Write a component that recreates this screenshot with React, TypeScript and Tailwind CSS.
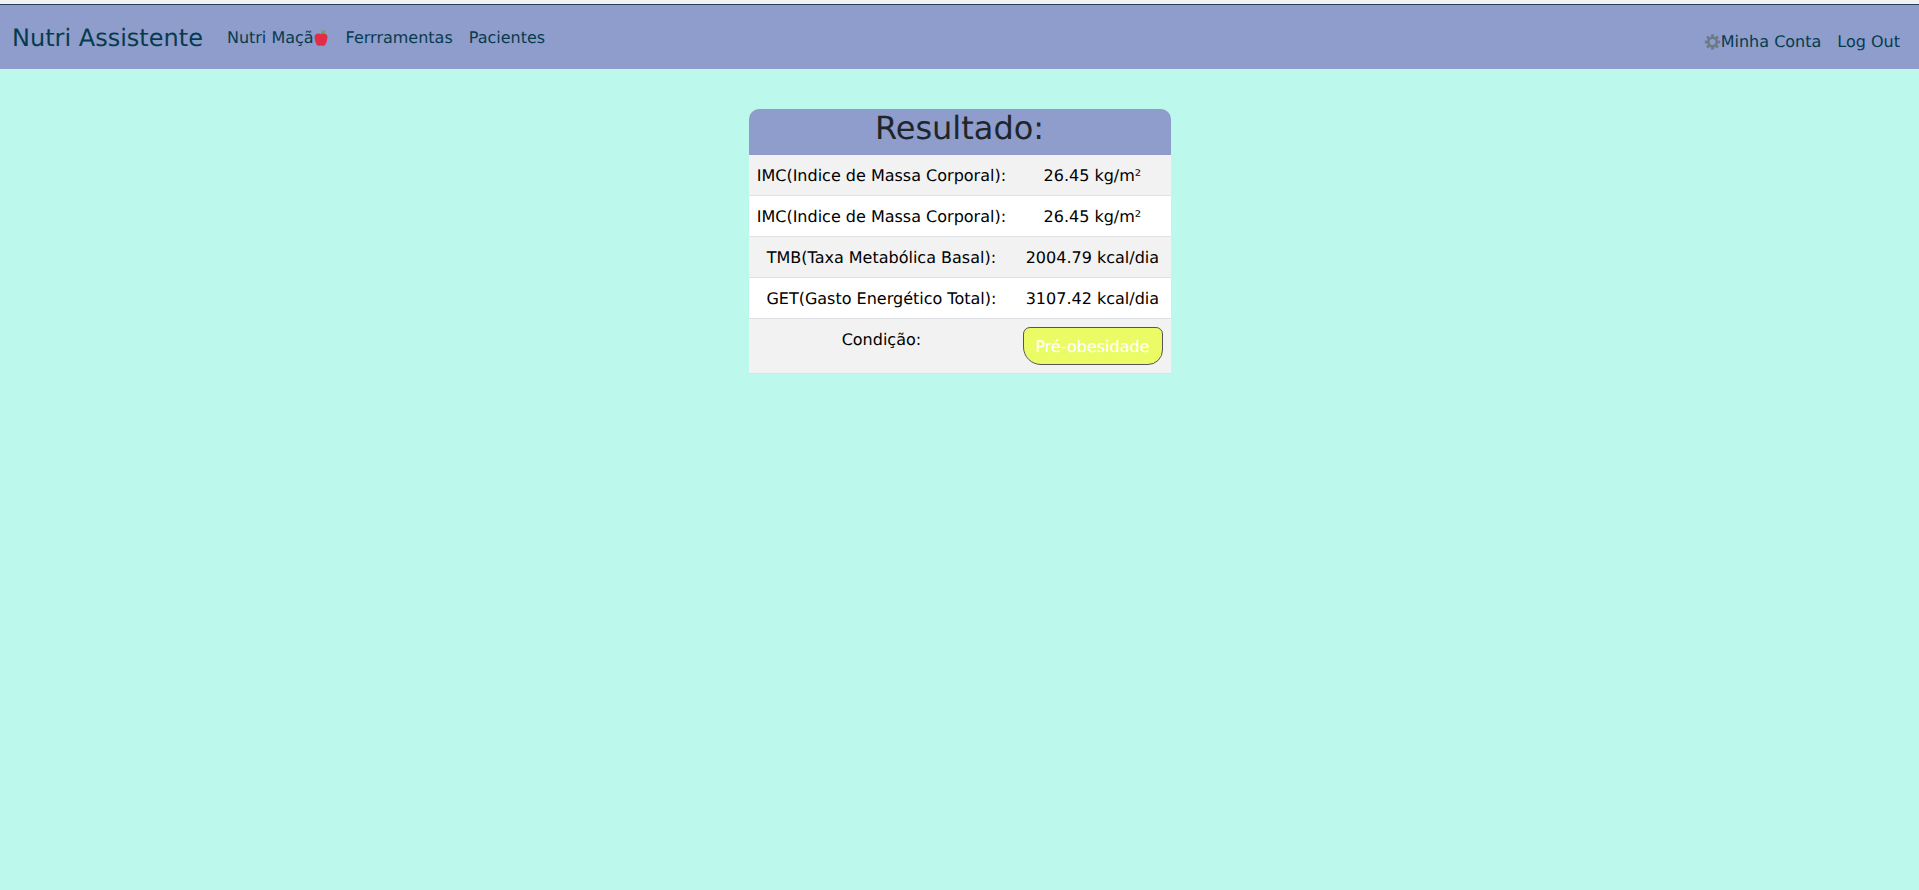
import React from 'react'

const AppleIcon = () => (
  <svg width="14" height="16" viewBox="0 0 14 16" className="mr-0.5 inline-block">
    <path d="M6.6 4 L7.4 1.6 C8.4 0.4 9.8 0.2 11.4 0.4 L11.2 2.2 C10.4 3.4 9 4 7.4 4.4 Z" fill="#7ba05b" />
    <path d="M7 4.2 C5 3 1 3.2 0.6 6.4 C0.3 9.4 1.8 14 3.6 15.6 C5 16.2 5.8 15.5 7 15.5 C8.2 15.5 9 16.2 10.4 15.6 C12.2 14 13.7 9.4 13.4 6.4 C13 3.2 9 3 7 4.2 Z" fill="#e22e45" />
  </svg>
)

const GearIcon = () => (
  <svg width="17" height="16" viewBox="0 0 16 16" className="inline-block">
    <g stroke="#6d7b85" strokeWidth="2.8">
      <line x1="8" y1="0.3" x2="8" y2="15.7" />
      <line x1="0.3" y1="8" x2="15.7" y2="8" />
      <line x1="2.6" y1="2.6" x2="13.4" y2="13.4" />
      <line x1="13.4" y1="2.6" x2="2.6" y2="13.4" />
    </g>
    <circle cx="8" cy="8" r="4.2" fill="#8e9dcc" stroke="#6d7b85" strokeWidth="2.6" />
  </svg>
)

const rows = [
  ['IMC(Indice de Massa Corporal):', '26.45 kg/m²'],
  ['IMC(Indice de Massa Corporal):', '26.45 kg/m²'],
  ['TMB(Taxa Metabólica Basal):', '2004.79 kcal/dia'],
  ['GET(Gasto Energético Total):', '3107.42 kcal/dia'],
]

export default function App() {
  return (
    <div className="min-h-screen bg-[#bcf8ec] font-['DejaVu_Sans',sans-serif] text-base leading-6 [text-rendering:geometricPrecision]">
      <div className="h-1 bg-[#f2f2f5]" />
      <div className="h-px bg-[#26405c]" />
      {/* Navbar */}
      <nav className="flex h-16 items-center justify-between bg-[#8e9dcc] pl-3 pr-[19px] text-[#073b4c]">
        <div className="mt-0.5 flex items-center">
          <span className="mr-6 text-2xl leading-9">Nutri Assistente</span>
          <div className="flex items-center gap-4">
            <a className="flex items-center">Nutri Maçã<AppleIcon /></a>
            <a>Ferrramentas</a>
            <a>Pacientes</a>
          </div>
        </div>
        <div className="mt-2.5 flex items-center gap-4">
          <a className="flex items-center"><GearIcon />Minha Conta</a>
          <a>Log Out</a>
        </div>
      </nav>

      {/* Result card */}
      <div className="flex justify-center pt-10">
        <div className="w-[422px]">
          <h1 className="rounded-t-[10px] bg-[#8e9dcc] pb-2 text-center text-[32px] leading-[38px] text-[#212529]">Resultado:</h1>
          <table className="w-full border-collapse text-center text-black">
            <tbody>
              {rows.map(([label, value], i) => (
                <tr key={i} className={i % 2 === 0 ? 'bg-[#f2f2f2]' : 'bg-white'}>
                  <td className="border-b border-[#dee2e6] px-2 pt-[9px] pb-[7px]">{label}</td>
                  <td className="border-b border-[#dee2e6] px-2 pt-[9px] pb-[7px]">{value}</td>
                </tr>
              ))}
              <tr className="bg-[#f2f2f2]">
                <td className="border-b border-[#dee2e6] px-2 pt-[9px] pb-[7px] align-top">Condição:</td>
                <td className="border-b border-[#dee2e6] p-2">
                  <div className="ml-auto w-[140px] rounded-t-[7px] rounded-br-[15px] rounded-bl-[18px] border border-[#555] bg-[#ebfb66] pt-[7px] pb-[5px] text-white">Pré-obesidade</div>
                </td>
              </tr>
            </tbody>
          </table>
        </div>
      </div>
    </div>
  )
}
